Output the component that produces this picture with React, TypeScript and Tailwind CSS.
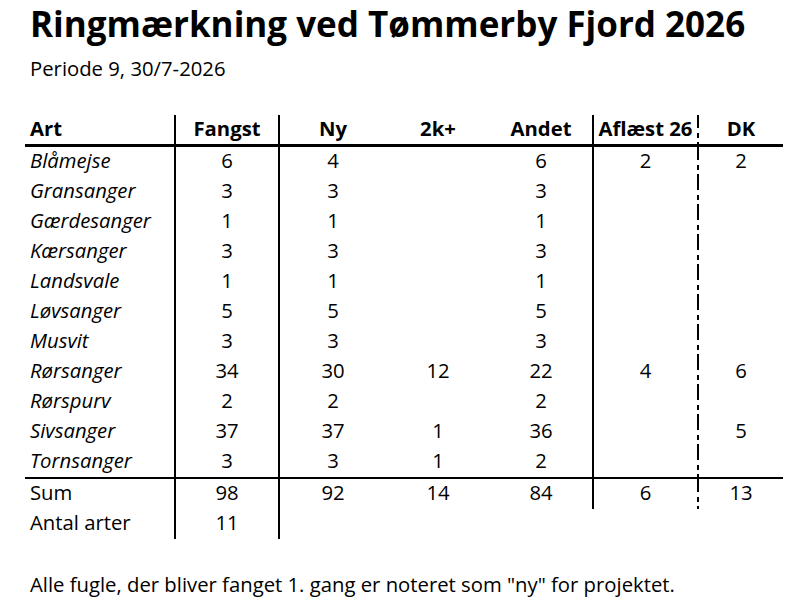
const COLS = "grid grid-cols-[151px_104px_106px_104px_104px_105px_84px]";

// dash-dot line on the right edge of the "Aflæst 26" column, repeats every 30px row
const DASH =
  "bg-[linear-gradient(to_bottom,#000_0_13px,transparent_13px_18px,#000_18px_23px,transparent_23px_27px,#000_27px_30px)] bg-no-repeat bg-right bg-[length:2px_100%]";

type Row = [string, string, string, string, string, string, string];

const ROWS: Row[] = [
  ["Blåmejse", "6", "4", "", "6", "2", "2"],
  ["Gransanger", "3", "3", "", "3", "", ""],
  ["Gærdesanger", "1", "1", "", "1", "", ""],
  ["Kærsanger", "3", "3", "", "3", "", ""],
  ["Landsvale", "1", "1", "", "1", "", ""],
  ["Løvsanger", "5", "5", "", "5", "", ""],
  ["Musvit", "3", "3", "", "3", "", ""],
  ["Rørsanger", "34", "30", "12", "22", "4", "6"],
  ["Rørspurv", "2", "2", "", "2", "", ""],
  ["Sivsanger", "37", "37", "1", "36", "", "5"],
  ["Tornsanger", "3", "3", "1", "2", "", ""],
];

function TableRow({
  cells,
  header = false,
  italic = false,
  className = "",
}: {
  cells: Row;
  header?: boolean;
  italic?: boolean;
  className?: string;
}) {
  const h = header ? "h-[29px]" : "h-[30px]";
  return (
    <div className={`${COLS} ${className} ${header ? "font-bold" : ""}`}>
      <div className={`${h} border-r-2 border-black pl-[5px] ${italic ? "italic" : ""}`}>{cells[0]}</div>
      <div className={`${h} border-r-2 border-black text-center`}>{cells[1]}</div>
      <div className={`${h} text-center`}>{cells[2]}</div>
      <div className={`${h} text-center`}>{cells[3]}</div>
      <div className={`${h} border-r-2 border-black text-center`}>{cells[4]}</div>
      <div className={`${h} ${DASH} pr-[2px] text-center`}>{cells[5]}</div>
      <div className={`${h} text-center`}>{cells[6]}</div>
    </div>
  );
}

export default function App() {
  return (
    <div className="h-[616px] w-[794px] overflow-hidden bg-white font-['Open_Sans',sans-serif] text-black">
      {/* Title */}
      <h1 className="pl-[30px] pt-[4px] text-[35px] font-bold leading-[40px]">
        Ringmærkning ved Tømmerby Fjord 2026
      </h1>
      <p className="mt-[12px] pl-[30px] text-[20.3px] leading-[24px]">Periode 9, 30/7-2026</p>

      {/* Table */}
      <div className="ml-[25px] mt-[35px] w-[758px] text-[20.3px] leading-[26px]">
        <TableRow
          header
          className="border-b-[3px] border-black"
          cells={["Art", "Fangst", "Ny", "2k+", "Andet", "Aflæst 26", "DK"]}
        />
        {ROWS.map((r, i) => (
          <TableRow
            key={r[0]}
            italic
            cells={r}
            className={i === ROWS.length - 1 ? "border-b-2 border-black" : ""}
          />
        ))}
        <TableRow cells={["Sum", "98", "92", "14", "84", "6", "13"]} />
        <div className={COLS}>
          <div className="h-[30px] border-r-2 border-black pl-[5px]">Antal arter</div>
          <div className="h-[30px] border-r-2 border-black text-center">11</div>
        </div>
      </div>

      <p className="mt-[33px] pl-[30px] text-[20.3px] leading-[24px]">
        Alle fugle, der bliver fanget 1. gang er noteret som "ny" for projektet.
      </p>
    </div>
  );
}
